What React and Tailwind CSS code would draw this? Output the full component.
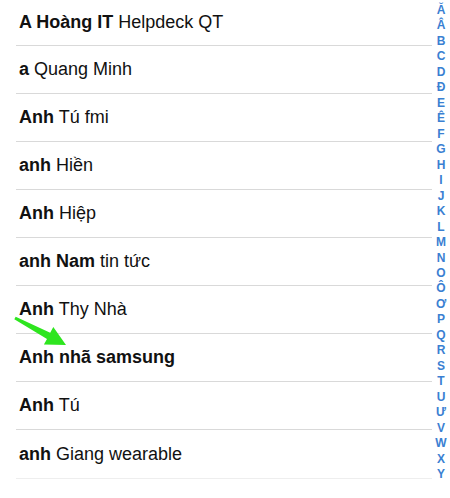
import React from 'react';

const contacts = [
  { bold: 'A Hoàng IT', rest: ' Helpdeck QT' },
  { bold: 'a', rest: ' Quang Minh' },
  { bold: 'Anh', rest: ' Tú fmi' },
  { bold: 'anh', rest: ' Hiền' },
  { bold: 'Anh', rest: ' Hiệp' },
  { bold: 'anh Nam', rest: ' tin tức' },
  { bold: 'Anh', rest: ' Thy Nhà' },
  { bold: 'Anh nhã samsung', rest: '' },
  { bold: 'Anh', rest: ' Tú' },
  { bold: 'anh', rest: ' Giang wearable' },
];

const letters = ['Ă', 'Â', 'B', 'C', 'D', 'Đ', 'E', 'Ê', 'F', 'G', 'H', 'I', 'J', 'K', 'L', 'M', 'N', 'O', 'Ô', 'Ơ', 'P', 'Q', 'R', 'S', 'T', 'U', 'Ư', 'V', 'W', 'X', 'Y'];

const App = () => {
  return (
    <div className="relative w-[450px] h-[498px] bg-white overflow-hidden" style={{ fontFamily: '"Liberation Sans", Arial, sans-serif' }}>
      <div className="flex">
        {/* Danh sách */}
        <div className="w-[432px] pl-4">
          <div className="border-b border-[#eeeeee]">
            {contacts.map((c, i) => (
              <div
                key={i}
                className={`flex items-center pl-[3px] text-[18px] text-[#111] ${i === 0 ? 'h-[46px]' : 'h-[48px]'} ${i < contacts.length - 1 ? 'border-b border-[#d9d9d9]' : ''}`}
              >
                <span className="font-bold whitespace-pre">{c.bold}</span>
                <span className="whitespace-pre">{c.rest}</span>
              </div>
            ))}
          </div>
        </div>

        {/* Chỉ mục chữ cái */}
        <div className="w-[18px] pt-[3px] flex flex-col items-center">
          {letters.map((l) => (
            <div key={l} className="h-[15.47px] leading-[15.47px] text-[12px] font-bold text-[#3a80d2]">
              {l}
            </div>
          ))}
        </div>
      </div>

      {/* Mũi tên xanh */}
      <svg className="absolute left-0 top-0" width="450" height="498" viewBox="0 0 450 498">
        <path d="M15.7 316.7 L50.2 332.7 L53.3 327 L66 345 L43.9 344.6 L47 338.9 L14.3 319.3 Z" fill="#2ee51f" />
      </svg>
    </div>
  );
};

export default App;
